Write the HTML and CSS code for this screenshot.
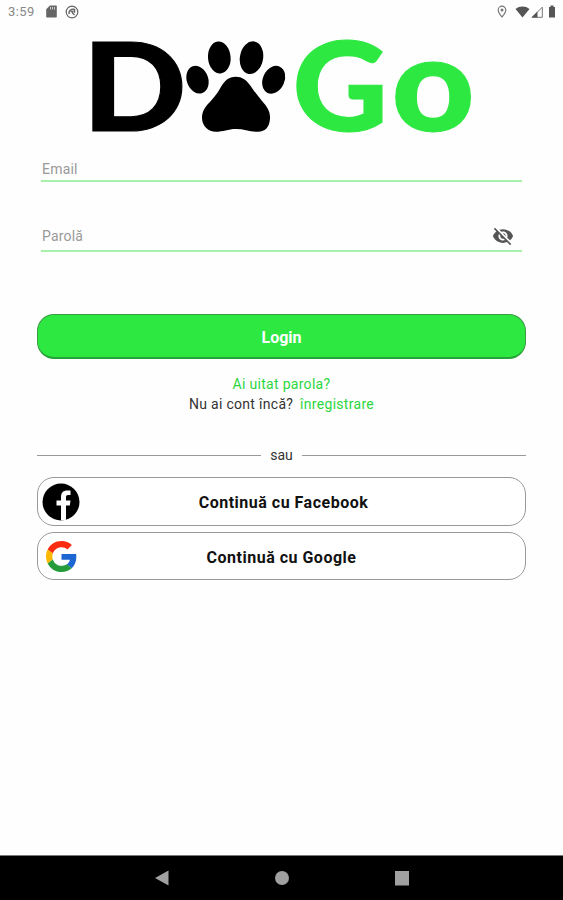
FILE: index.html
```html
<!DOCTYPE html>
<html lang="ro">
<head>
  <meta charset="utf-8">
  <title>DoGo</title>
  <link rel="stylesheet" href="styles.css">
</head>
<body>
  <header class="status-bar">
    <span class="clock">3:59</span>
    <svg class="status-sd" viewBox="0 0 11 13"><path fill="#666" d="M4 0.5h6a.8.8 0 0 1 .8.8v10.4a.8.8 0 0 1-.8.8H1a.8.8 0 0 1-.8-.8V4.3z"/><path stroke="#ccc" stroke-width="1" d="M4.5 2v2.5M6.5 2v2.5M8.5 2v2.5"/></svg>
    <svg class="status-app" viewBox="0 0 14 14"><circle cx="7" cy="7" r="5.8" fill="none" stroke="#666" stroke-width="1.2"/><path fill="none" stroke="#666" stroke-width="1.4" d="M4.2 9C3.2 6 6 3.500 9.500 4.500v3.200M5.500 6.500h3M7 7.500l2.500 2.500"/></svg>
    <span class="spacer"></span>
    <svg class="status-pin" viewBox="0 0 10 13"><path fill="none" stroke="#777" stroke-width="1.200" d="M5 12C3 9.500 1.200 7.500 1.200 5a3.800 3.800 0 0 1 7.600 0C8.800 7.500 7 9.500 5 12z"/><circle cx="5" cy="5" r="1.500" fill="#777"/></svg>
    <svg class="status-wifi" viewBox="0 0 15 12"><path fill="#555" d="M7.500 11.500.5 3C4.500-.3 10.500-.3 14.500 3z"/></svg>
    <svg class="status-signal" viewBox="0 0 12 12"><path fill="none" stroke="#777" d="M1.200 11.300 11.300 1.200v10.100z"/><path fill="#555" d="M.5 11.500 6.500 5.500v6z"/></svg>
    <svg class="status-battery" viewBox="0 0 8 13"><path fill="#555" d="M2.500 0.500h3v1.500h1.500v10.500h-6v-10.500h1.500z"/></svg>
  </header>

  <main class="login">
    <svg class="logo" viewBox="0 0 380 96">
      <text class="logo-black" transform="translate(-9.600 92.800) scale(1.140 1.020)">D</text>
      <g>
        <ellipse cx="105.500" cy="41.700" rx="10.700" ry="14.200" transform="rotate(-20 105.500 41.700)"/>
        <ellipse cx="127.300" cy="19.500" rx="11.300" ry="16" transform="rotate(-5 127.300 19.500)"/>
        <ellipse cx="159.500" cy="19.700" rx="11.600" ry="16.500" transform="rotate(10 159.500 19.700)"/>
        <ellipse cx="181.700" cy="41.800" rx="10.800" ry="14.500" transform="rotate(25 181.700 41.800)"/>
        <path d="M143.500 38.700c7 0 11 3.300 15.500 9.800 4 6 7 9.500 11 14.500 5 5.500 8.500 10.500 8 17.500-.4 8-4.500 13.300-12 13.300-8 0-14-2.800-22-2.800s-13 2.800-20 2.800c-8 0-14-6-14-14 0-7 4-12 9-17 5-5.500 7-8.500 10-14 4-6.500 8-10.100 14.500-10.100z"/>
      </g>
      <text class="logo-green" transform="translate(200.400 92.800) scale(1.100 1.040)">G</text>
      <text class="logo-green" transform="translate(299.400 92.800) scale(1.200 1.100)">o</text>
    </svg>

    <div class="field">
      <span class="placeholder">Email</span>
    </div>
    <div class="field field-password">
      <span class="placeholder">Parolă</span>
      <svg class="eye" viewBox="0 0 24 24"><path fill="#555" d="M12 7c2.760 0 5 2.240 5 5 0 .65-.13 1.260-.36 1.830l2.920 2.920c1.510-1.260 2.700-2.890 3.430-4.750-1.730-4.390-6-7.500-11-7.500-1.400 0-2.740.25-3.980.7l2.160 2.160C10.740 7.130 11.350 7 12 7zM2 4.270l2.280 2.280.46.46C3.080 8.300 1.780 10.020 1 12c1.730 4.390 6 7.500 11 7.500 1.550 0 3.030-.3 4.380-.84l.42.42L19.730 22 21 20.730 3.270 3 2 4.270zM7.530 9.800l1.550 1.550c-.05.21-.08.43-.08.65 0 1.660 1.340 3 3 3 .22 0 .44-.03.65-.08l1.550 1.550c-.67.33-1.410.53-2.200.53-2.760 0-5-2.240-5-5 0-.79.2-1.530.53-2.200zm4.310-.78l3.150 3.150.02-.16c0-1.660-1.340-3-3-3l-.17.01z"/></svg>
    </div>

    <button class="btn btn-login">Login</button>

    <a class="forgot">Ai uitat parola?</a>
    <p class="register">Nu ai cont încă? <a>înregistrare</a></p>

    <div class="divider"><span>sau</span></div>

    <button class="btn btn-social btn-facebook">
      <svg class="social-icon" viewBox="0 0 38 38"><circle cx="19" cy="19" r="18.500"/><path fill="#fff" d="M19 37.500V22.500h-4.500v-5H19v-3.500c0-4.500 2.500-6.500 6.200-6.500h3.300v4.500h-2.300c-1.700 0-2.200.9-2.200 2.300v3.200h4.500l-.7 5H24v14.300z"/></svg>
      <span>Continuă cu Facebook</span>
    </button>
    <button class="btn btn-social btn-google">
      <svg class="social-icon" viewBox="0 0 48 48"><path fill="#fb2b12" d="M24 9.500c3.540 0 6.710 1.220 9.210 3.600l6.850-6.850C35.900 2.380 30.470 0 24 0 14.620 0 6.510 5.380 2.560 13.220l7.980 6.190C12.430 13.720 17.740 9.500 24 9.500z"/><path fill="#1c67d2" d="M46.980 24.550c0-1.570-.15-3.090-.38-4.550H24v9.020h12.940c-.58 2.960-2.260 5.480-4.780 7.180l7.730 6c4.510-4.180 7.090-10.360 7.090-17.650z"/><path fill="#fbb905" d="M10.530 28.590c-.48-1.450-.76-2.990-.76-4.590s.27-3.140.76-4.590l-7.980-6.190C.92 16.460 0 20.120 0 24c0 3.880.92 7.540 2.560 10.780l7.970-6.190z"/><path fill="#259b3c" d="M24 48c6.480 0 11.930-2.130 15.890-5.810l-7.730-6c-2.150 1.450-4.920 2.300-8.160 2.300-6.260 0-11.570-4.220-13.470-9.910l-7.980 6.190C6.510 42.620 14.620 48 24 48z"/></svg>
      <span>Continuă cu Google</span>
    </button>
  </main>

  <nav class="nav-bar">
    <svg viewBox="0 0 16 16"><path d="M1 8 14.500.5v15z"/></svg>
    <svg viewBox="0 0 16 16"><circle cx="8" cy="8" r="7"/></svg>
    <svg viewBox="0 0 16 16"><path d="M1 1h14v14.500H1z"/></svg>
  </nav>
</body>
</html>
```
FILE: styles.css
```css
* {
  box-sizing: border-box;
}

body {
  margin: 0;
  height: 100vh;
  display: flex;
  flex-direction: column;
  background: #fefefe;
  font-family: Roboto, sans-serif;
  font-size: 14px;
  color: #333;
}

svg {
  display: block;
  flex: none;
}

.status-bar {
  height: 24px;
  padding: 0 7px 1px 8px;
  display: flex;
  align-items: center;
}

.clock {
  width: 38px;
  font-size: 13px;
  letter-spacing: 0.4px;
  color: #888;
}

.spacer {
  flex: 1;
}

.status-sd {
  width: 11px;
  height: 13px;
  margin-right: 8px;
}

.status-app {
  width: 14px;
  height: 14px;
}

.status-pin {
  width: 10px;
  height: 13px;
  margin-right: 8px;
}

.status-wifi {
  width: 15px;
  height: 12px;
  margin-right: 1px;
}

.status-signal {
  width: 12px;
  height: 12px;
  margin-right: 5px;
}

.status-battery {
  width: 8px;
  height: 13px;
}

.login {
  flex: 1;
  padding: 14px 37px 0;
  display: flex;
  flex-direction: column;
}

.logo {
  width: 380px;
  height: 96px;
  margin: 0 0 23px 55px;
  overflow: visible;
}

.logo text {
  font-family: Lato, sans-serif;
  font-weight: 900;
  font-size: 120px;
  stroke-width: 1px;
}

.logo-black {
  fill: #000;
  stroke: #000;
}

.logo-green {
  fill: #2ee842;
  stroke: #2ee842;
}

.field {
  height: 25px;
  margin: 0 4px;
  padding: 0 1px;
  display: flex;
  align-items: center;
  border-bottom: 2px solid #a9f0ac;
}

.field-password {
  height: 32px;
  margin-top: 38px;
  padding-top: 1px;
  justify-content: space-between;
}

.placeholder {
  color: #999;
  letter-spacing: 0.2px;
}

.eye {
  width: 22px;
  height: 22px;
  margin-right: 7px;
}

.btn {
  width: 100%;
  padding: 0;
  border-radius: 17px;
  font: bold 16px Roboto, sans-serif;
}

.btn-login {
  height: 45px;
  margin: 62px 0 15px;
  padding-top: 2px;
  border: 1px solid #3a9b45;
  border-bottom: 2px solid #26a336;
  background: #2ee842;
  color: #fff;
}

.forgot,
.register {
  margin: 0;
  line-height: 20px;
  text-align: center;
  letter-spacing: 0.3px;
}

.forgot,
.register a {
  color: #2cd640;
}

.register a {
  margin-left: 3px;
}

.divider {
  margin: 32px 0 13px;
  display: flex;
  align-items: center;
  gap: 9px;
  line-height: 18px;
}

.divider::before,
.divider::after {
  content: "";
  flex: 1;
  height: 1px;
  background: #999;
}

.btn-social {
  height: 49px;
  display: grid;
  grid-template-columns: 38px 1fr 34px;
  align-items: center;
  padding: 0 4px;
  border: 1px solid #999;
  background: #fff;
  color: #111;
  letter-spacing: 0.5px;
}

.btn-social span {
  padding-top: 2px;
}

.btn-google {
  height: 48px;
  margin-top: 6px;
}

.btn-google span {
  padding-right: 4px;
}

.social-icon {
  width: 38px;
  height: 38px;
}

.btn-google .social-icon {
  width: 31px;
  height: 31px;
  margin-left: 4px;
}

.nav-bar {
  height: 45px;
  display: flex;
  justify-content: center;
  align-items: center;
  gap: 104px;
  border-top: 1px solid #777;
  background: #000;
}

.nav-bar svg {
  width: 16px;
  height: 16px;
  fill: #a0a0a0;
}
```
